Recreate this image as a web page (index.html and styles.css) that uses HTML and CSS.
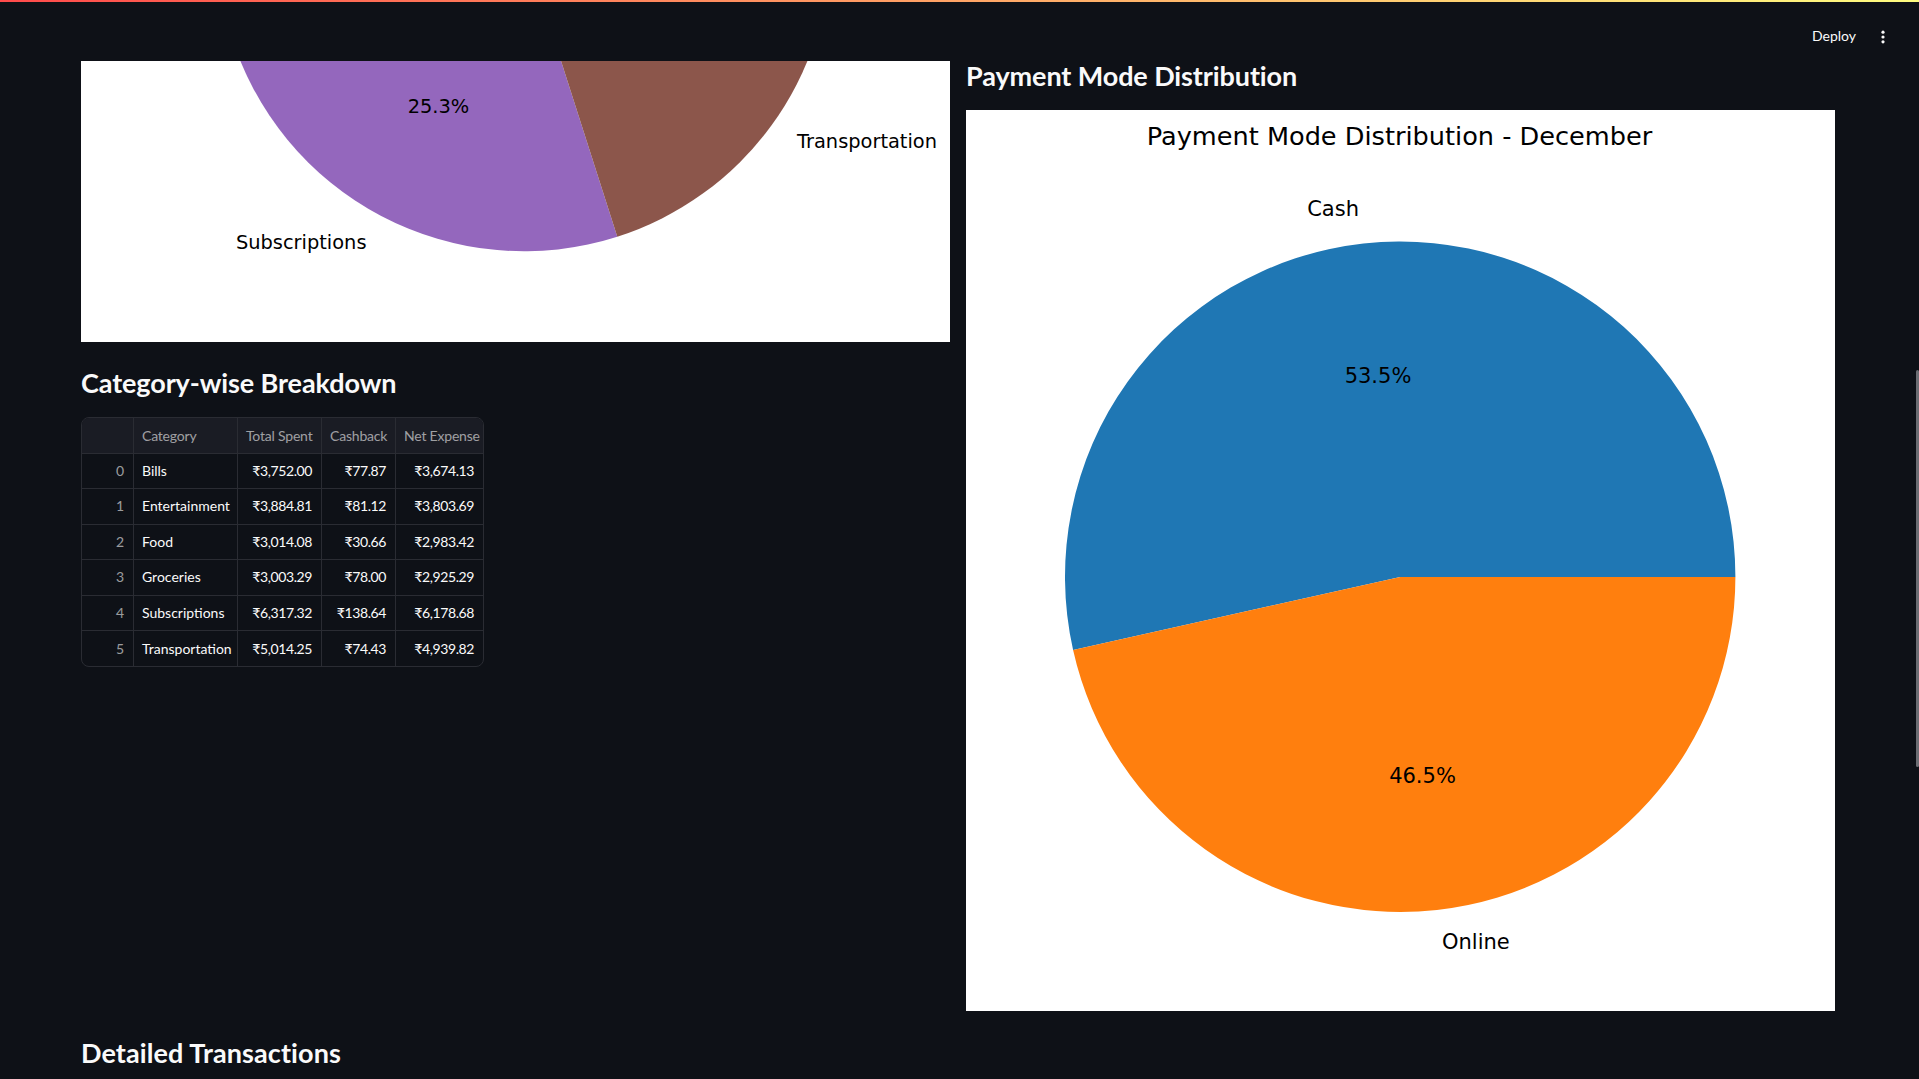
FILE: index.html
```html
<!DOCTYPE html>
<html lang="en">
<head>
<meta charset="utf-8">
<title>Expense Dashboard</title>
<link rel="stylesheet" href="styles.css">
</head>
<body>
<div class="decoration"></div>
<header class="app-header">
  <div class="toolbar">
    <button class="deploy" type="button">Deploy</button>
    <button class="menu" type="button" aria-label="Main menu">
      <svg viewBox="0 0 20 20" width="20" height="20"><circle cx="10" cy="5.2" r="1.6"/><circle cx="10" cy="10" r="1.6"/><circle cx="10" cy="14.8" r="1.6"/></svg>
    </button>
  </div>
</header>

<main class="main">
  <div class="columns">
    <section class="col">
      <figure class="chart chart-category">
        <svg class="pie" viewBox="0 0 869 281" width="869" height="281" role="img" aria-label="Spending by category">
          <path fill="#1f77b4" d="M442.9 -116.1 L749.3 -116.1 A306.4 306.4 0 0 0 622.7 -364.2 Z"/>
          <path fill="#ff7f0e" d="M442.9 -116.1 L622.7 -364.2 A306.4 306.4 0 0 0 338.0 -404.0 Z"/>
          <path fill="#2ca02c" d="M442.9 -116.1 L338.0 -404.0 A306.4 306.4 0 0 0 168.8 -253.0 Z"/>
          <path fill="#d62728" d="M442.9 -116.1 L168.8 -253.0 A306.4 306.4 0 0 0 149.5 -27.9 Z"/>
          <path fill="#9467bd" d="M442.9 -116.1 L149.5 -27.9 A306.4 306.4 0 0 0 536.3 175.7 Z"/>
          <path fill="#8c564b" d="M442.9 -116.1 L536.3 175.7 A306.4 306.4 0 0 0 749.3 -116.1 Z"/>
          <text class="mpl-sm" x="357.5" y="52" text-anchor="middle">25.3%</text>
          <text class="mpl-sm" x="285.5" y="188" text-anchor="end">Subscriptions</text>
          <text class="mpl-sm" x="716" y="87">Transportation</text>
        </svg>
      </figure>

      <h3 class="heading heading-breakdown">Category-wise Breakdown</h3>

      <div class="dataframe">
        <table>
          <thead>
            <tr>
              <th class="c-idx"></th>
              <th class="c-cat">Category</th>
              <th class="c-tot">Total Spent</th>
              <th class="c-cb">Cashback</th>
              <th class="c-net">Net Expense</th>
            </tr>
          </thead>
          <tbody>
            <tr><td class="idx">0</td><td>Bills</td><td class="num">₹3,752.00</td><td class="num">₹77.87</td><td class="num">₹3,674.13</td></tr>
            <tr><td class="idx">1</td><td>Entertainment</td><td class="num">₹3,884.81</td><td class="num">₹81.12</td><td class="num">₹3,803.69</td></tr>
            <tr><td class="idx">2</td><td>Food</td><td class="num">₹3,014.08</td><td class="num">₹30.66</td><td class="num">₹2,983.42</td></tr>
            <tr><td class="idx">3</td><td>Groceries</td><td class="num">₹3,003.29</td><td class="num">₹78.00</td><td class="num">₹2,925.29</td></tr>
            <tr><td class="idx">4</td><td>Subscriptions</td><td class="num">₹6,317.32</td><td class="num">₹138.64</td><td class="num">₹6,178.68</td></tr>
            <tr><td class="idx">5</td><td>Transportation</td><td class="num">₹5,014.25</td><td class="num">₹74.43</td><td class="num">₹4,939.82</td></tr>
          </tbody>
        </table>
      </div>
    </section>

    <section class="col">
      <h3 class="heading heading-payment">Payment Mode Distribution</h3>
      <figure class="chart chart-payment">
        <svg class="pie" viewBox="0 0 869 901" width="869" height="901" role="img" aria-label="Payment mode distribution">
          <text class="mpl-title" x="433.5" y="35" text-anchor="middle">Payment Mode Distribution - December</text>
          <path fill="#1f77b4" d="M434.2 466.9 L769.4 466.9 A335.2 335.2 0 1 0 107.1 540 Z"/>
          <path fill="#ff7f0e" d="M434.2 466.9 L107.1 540 A335.2 335.2 0 0 0 769.4 466.9 Z"/>
          <text class="mpl" x="393" y="106" text-anchor="end">Cash</text>
          <text class="mpl" x="412" y="273" text-anchor="middle">53.5%</text>
          <text class="mpl" x="456.5" y="673" text-anchor="middle">46.5%</text>
          <text class="mpl" x="476" y="839">Online</text>
        </svg>
      </figure>
    </section>
  </div>

  <h3 class="heading heading-section">Detailed Transactions</h3>
</main>

<div class="scroll-thumb"></div>
</body>
</html>
```

FILE: styles.css
```css
html, body {
  margin: 0;
  padding: 0;
  height: 100%;
  overflow: hidden;
  background: #0e1117;
}

body {
  font-family: Lato, "Noto Sans", "DejaVu Sans", sans-serif;
  color: #fafafa;
}

.decoration {
  position: fixed;
  top: 0;
  left: 0;
  right: 0;
  height: 2px;
  background-image: linear-gradient(90deg, #ff4b4b, #fffd80);
  z-index: 20;
}

.app-header {
  position: fixed;
  top: 0;
  left: 0;
  right: 0;
  height: 60px;
  background: #0e1117;
  z-index: 10;
}

.toolbar {
  box-sizing: border-box;
  height: 60px;
  padding: 12px 26px 0 0;
  display: flex;
  justify-content: flex-end;
  align-items: center;
}

.deploy {
  background: none;
  border: none;
  padding: 0;
  margin-right: 17px;
  font: 400 14px/20px Lato, "Noto Sans", sans-serif;
  color: #fafafa;
}

.menu {
  background: none;
  border: none;
  padding: 0;
  width: 20px;
  height: 20px;
  display: flex;
  margin-top: 2px;
}

.menu svg {
  fill: #fafafa;
}

.main {
  padding: 58px 84px 0 81px;
}

.columns {
  display: grid;
  grid-template-columns: 1fr 1fr;
  gap: 16px;
  align-items: start;
}

.chart {
  margin: 0;
  background: #ffffff;
  overflow: hidden;
}

.chart svg {
  display: block;
}

.chart-category {
  margin-top: 3px;
  height: 281px;
}

.chart-payment {
  height: 901px;
}

.mpl, .mpl-sm, .mpl-title {
  font-family: "DejaVu Sans", sans-serif;
  fill: #000000;
}

.mpl-sm { font-size: 19.4px; }
.mpl { font-size: 21px; }
.mpl-title { font-size: 25.6px; }

.heading {
  margin: 0;
  font: 700 27px/34px Lato, "Noto Sans", sans-serif;
  letter-spacing: -0.1px;
  color: #fafafa;
}

.heading-breakdown {
  margin: 24px 0 17px;
}

.heading-payment {
  margin: 1px 0 17px;
}

.heading-section {
  margin-top: 25px;
  letter-spacing: 0.1px;
}

.dataframe {
  width: 401px;
  border: 1px solid #2a2c33;
  border-radius: 8px;
  overflow: hidden;
}

.dataframe table {
  width: 401px;
  table-layout: fixed;
  border-collapse: separate;
  border-spacing: 0;
  font-family: Lato, "Noto Sans", "DejaVu Sans", sans-serif;
  font-size: 14px;
}

.dataframe th,
.dataframe td {
  box-sizing: border-box;
  padding: 0 9px 0 8px;
  border-right: 1px solid #2a2c33;
  border-bottom: 1px solid #2a2c33;
  white-space: nowrap;
  overflow: hidden;
}

.dataframe th:last-child,
.dataframe td:last-child {
  border-right: none;
}

.dataframe th {
  line-height: 35px;
  background: #1a1c24;
  color: rgba(250, 250, 250, 0.6);
  font-weight: 400;
  text-align: left;
  letter-spacing: -0.2px;
}

.dataframe td {
  line-height: 34.4px;
  color: #fafafa;
}

.dataframe tbody tr:last-child td {
  border-bottom: none;
  line-height: 35.4px;
}

.c-idx { width: 52px; }
.c-cat { width: 104px; }
.c-tot { width: 84px; }
.c-cb { width: 74px; }
.c-net { width: 87px; }

.dataframe td.idx {
  text-align: right;
  padding-right: 9px;
  color: rgba(250, 250, 250, 0.6);
}

.dataframe td.num {
  text-align: right;
  letter-spacing: -0.4px;
}

.scroll-thumb {
  position: fixed;
  top: 370px;
  right: 0;
  width: 3px;
  height: 397px;
  border-radius: 2px;
  background: #6c6e74;
  z-index: 30;
}
```
